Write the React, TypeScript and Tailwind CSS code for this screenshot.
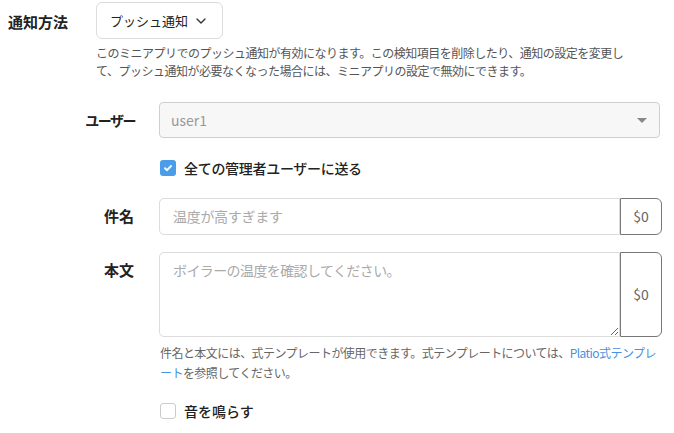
import React from "react";
import { ChevronDown } from "lucide-react";

const font = { fontFamily: '"Noto Sans CJK JP", "Noto Sans", sans-serif' };

export default function App() {
  return (
    <div className="w-[674px] h-[433px] bg-white text-[#222] pt-[2px] overflow-hidden" style={font}>
      <div className="flex items-start mr-[12px]">
        <div className="w-[96px] pl-[8px] leading-[40px] text-[15px] font-bold text-[#222]">通知方法</div>
        <div className="flex-1">
          <div className="h-[37px] w-[127px] border border-[#dcdcdc] rounded-[6px] pl-[13px] pr-[13px] flex items-center justify-between text-[13px] text-[#222]">
            <span>プッシュ通知</span>
            <ChevronDown size={16} strokeWidth={2} className="text-[#333]" />
          </div>
          <p className="mt-[5px] text-[12px] leading-[18px] text-[#555] tracking-[-0.5px]">
            このミニアプリでのプッシュ通知が有効になります。この検知項目を削除したり、通知の設定を変更し
            <br />
            て、プッシュ通知が必要なくなった場合には、ミニアプリの設定で無効にできます。
          </p>

          <div className="mt-[22px] flex flex-col">
            <div className="flex items-center">
              <div className="w-[63px] pr-[24px] flex justify-end text-[14px] font-bold tracking-[-1.5px] whitespace-nowrap">
                <span>ユーザー</span>
              </div>
              <div className="flex-1 mr-[2px] h-[36px] bg-[#f7f7f7] border border-[#cfcfcf] rounded-[4px] flex items-center justify-between pl-[11px] pr-[12px]">
                <span className="text-[14px] text-[#999]">user1</span>
                <span className="w-0 h-0 border-l-[5px] border-r-[5px] border-t-[5px] border-l-transparent border-r-transparent border-t-[#888]" />
              </div>
            </div>

            <div className="mt-[22px] ml-[63px] flex items-center h-[16px]">
              <span className="w-[16px] h-[16px] rounded-[3px] bg-[#4a9de8] flex items-center justify-center ml-[1px]">
                <svg width="10" height="10" viewBox="0 0 10 10">
                  <path d="M2 5.2 L4.1 7.2 L8 3" fill="none" stroke="#fff" strokeWidth="1.9" strokeLinecap="round" strokeLinejoin="round" />
                </svg>
              </span>
              <span className="ml-[8px] text-[14px] font-medium tracking-[-0.3px]">全ての管理者ユーザーに送る</span>
            </div>

            <div className="mt-[22px] flex items-center">
              <div className="w-[63px] pr-[25px] text-right text-[15px] font-bold">件名</div>
              <div className="flex-1 flex h-[37px]">
                <div className="flex-1 border border-[#dcdcdc] rounded-l-[5px] flex items-center pl-[13px] text-[14px] text-[#aaa] tracking-[-0.3px]">
                  温度が高すぎます
                </div>
                <div className="w-[42px] border border-[#777] rounded-r-[6px] flex items-center justify-center text-[14px] text-[#666]">
                  $0
                </div>
              </div>
            </div>

            <div className="mt-[17px] flex items-start">
              <div className="w-[63px] pr-[25px] text-right text-[15px] font-bold leading-[36px]">本文</div>
              <div className="flex-1 flex h-[85px]">
                <textarea
                  readOnly
                  placeholder="ボイラーの温度を確認してください。"
                  className="flex-1 border border-[#dcdcdc] rounded-l-[5px] pl-[13px] pt-[6px] text-[14px] leading-[22px] tracking-[-0.6px] placeholder:text-[#aaa] outline-none resize"
                  style={font}
                />
                <div className="w-[42px] border border-[#777] rounded-r-[6px] flex items-center justify-center text-[14px] text-[#666]">
                  $0
                </div>
              </div>
            </div>

            <p className="mt-[6px] ml-[64px] text-[12px] leading-[20px] text-[#666] tracking-[-0.55px]">
              件名と本文には、式テンプレートが使用できます。式テンプレートについては、
              <span className="text-[#4a90e2]">Platio式テンプレ<br />ート</span>
              を参照してください。
            </p>

            <div className="mt-[20px] ml-[64px] flex items-center h-[16px]">
              <span className="w-[16px] h-[16px] rounded-[3px] border border-[#ccc] bg-white" />
              <span className="ml-[8px] text-[14px] font-medium">音を鳴らす</span>
            </div>
          </div>
        </div>
      </div>
    </div>
  );
}
